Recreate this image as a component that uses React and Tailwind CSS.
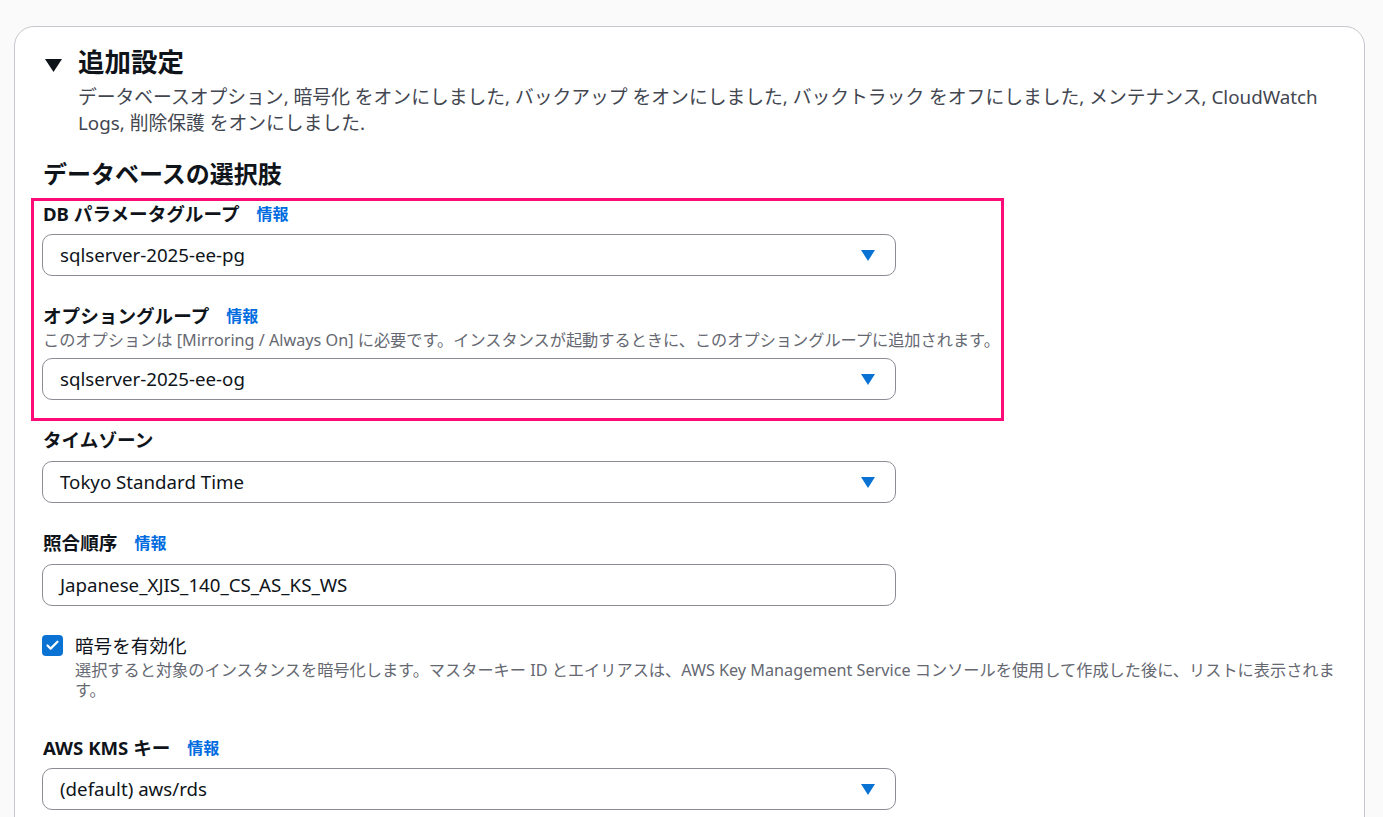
import { Check } from "lucide-react";

const FONT = "font-['Noto_Sans','Noto_Sans_CJK_JP',sans-serif]";

function Caret() {
  return (
    <svg width="14" height="11" viewBox="0 0 14 11" className="shrink-0">
      <path d="M0 0 H14 L7 11 Z" fill="#0972d3" />
    </svg>
  );
}

function Label({ children, info }) {
  return (
    <div className="flex items-center h-[24px] pl-[1px]">
      <span className="text-[18.6px] font-bold text-[#0f141a] leading-[24px]">{children}</span>
      {info && (
        <span className="ml-[17px] text-[16px] font-bold text-[#006ce0] leading-[24px]">情報</span>
      )}
    </div>
  );
}

function SelectBox({ value, caret = true }) {
  return (
    <div className="w-[854px] h-[42px] border border-[#8c8c94] rounded-[10px] bg-white flex items-center justify-between pl-[17px] pr-[20px]">
      <span className="text-[18.7px] text-[#0f141a]">{value}</span>
      {caret && <Caret />}
    </div>
  );
}

export default function App() {
  return (
    <div className={`${FONT} bg-[#fafafa] min-h-[817px] pt-[26px] overflow-hidden`}>
      <div className="ml-[14px] w-[1351px] h-[830px] bg-white border border-[#c6c6cd] rounded-[20px] pt-[19px] pl-[27px] pr-[24px]">
        {/* header */}
        <div className="flex items-center h-[32px]">
          <svg width="17" height="13" viewBox="0 0 17 13" className="ml-[3px] mt-[6px]">
            <path d="M0 0 H17 L8.5 13 Z" fill="#0f141a" />
          </svg>
          <h2 className="ml-[16px] text-[26.5px] font-bold text-[#0f141a] leading-[32px]">追加設定</h2>
        </div>
        <p className="ml-[36px] mt-[6px] text-[18.8px] leading-[26px] text-[#424650] max-w-[1250px]">
          データベースオプション, 暗号化 をオンにしました, バックアップ をオンにしました, バックトラック をオフにしました, メンテナンス, CloudWatch Logs, 削除保護 をオンにしました.
        </p>

        <h3 className="mt-[23px] pl-[1px] text-[24px] font-bold text-[#0f141a] leading-[30px]">
          データベースの選択肢
        </h3>

        {/* highlighted group */}
        <div className="mt-[9px] ml-[-11px] w-[973px] border-[3px] border-[#ff0a78] pl-[8px] pt-[1px] pb-[18px]">
          <Label info>DB パラメータグループ</Label>
          <div className="mt-[8px]">
            <SelectBox value="sqlserver-2025-ee-pg" />
          </div>
          <div className="mt-[28px]">
            <Label info>オプショングループ</Label>
          </div>
          <p className="mt-[2px] pl-[1px] text-[16.2px] leading-[20px] text-[#656871] whitespace-nowrap">
            このオプションは [Mirroring / Always On] に必要です。インスタンスが起動するときに、このオプショングループに追加されます。
          </p>
          <div className="mt-[8px]">
            <SelectBox value="sqlserver-2025-ee-og" />
          </div>
        </div>

        <div className="mt-[7px]">
          <Label>タイムゾーン</Label>
        </div>
        <div className="mt-[9px]">
          <SelectBox value="Tokyo Standard Time" />
        </div>

        <div className="mt-[28px]">
          <Label info>照合順序</Label>
        </div>
        <div className="mt-[9px]">
          <SelectBox value="Japanese_XJIS_140_CS_AS_KS_WS" caret={false} />
        </div>

        {/* encryption checkbox */}
        <div className="mt-[28px] flex">
          <div className="w-[21px] h-[21px] mt-[1px] rounded-[4px] bg-[#0972d3] flex items-center justify-center shrink-0">
            <Check size={15} strokeWidth={3.5} color="#ffffff" />
          </div>
          <div className="ml-[12px]">
            <div className="text-[18.6px] leading-[24px] text-[#0f141a]">暗号を有効化</div>
            <p className="mt-[2px] text-[16.2px] leading-[20px] text-[#656871] max-w-[1270px]">
              選択すると対象のインスタンスを暗号化します。マスターキー ID とエイリアスは、AWS Key Management Service コンソールを使用して作成した後に、リストに表示されます。
            </p>
          </div>
        </div>

        <div className="mt-[36px]">
          <Label info>AWS KMS キー</Label>
        </div>
        <div className="mt-[8px]">
          <SelectBox value="(default) aws/rds" />
        </div>
      </div>
    </div>
  );
}
